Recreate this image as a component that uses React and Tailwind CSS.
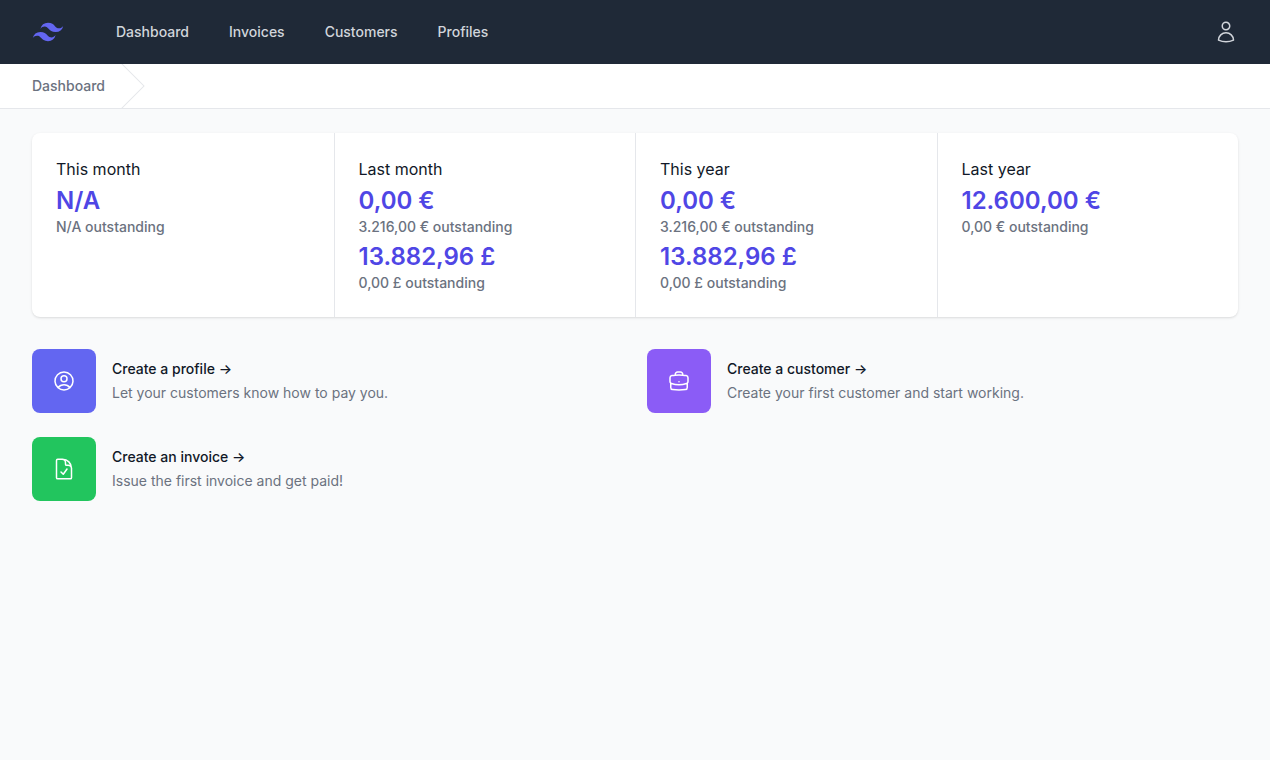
import React from 'react';
import {
  HiOutlineBriefcase,
  HiOutlineDocumentCheck,
  HiOutlineUser,
  HiOutlineUserCircle,
} from 'react-icons/hi2';

const navigation = ['Dashboard', 'Invoices', 'Customers', 'Profiles'];

const stats = [
  { name: 'This month', totals: [{ value: 'N/A', outstanding: 'N/A' }] },
  {
    name: 'Last month',
    totals: [
      { value: '0,00 €', outstanding: '3.216,00 €' },
      { value: '13.882,96 £', outstanding: '0,00 £' },
    ],
  },
  {
    name: 'This year',
    totals: [
      { value: '0,00 €', outstanding: '3.216,00 €' },
      { value: '13.882,96 £', outstanding: '0,00 £' },
    ],
  },
  { name: 'Last year', totals: [{ value: '12.600,00 €', outstanding: '0,00 €' }] },
];

const actions = [
  {
    title: 'Create a profile',
    description: 'Let your customers know how to pay you.',
    icon: HiOutlineUserCircle,
    background: 'bg-[#6366f1]',
  },
  {
    title: 'Create a customer',
    description: 'Create your first customer and start working.',
    icon: HiOutlineBriefcase,
    background: 'bg-[#8b5cf6]',
  },
  {
    title: 'Create an invoice',
    description: 'Issue the first invoice and get paid!',
    icon: HiOutlineDocumentCheck,
    background: 'bg-[#22c55e]',
  },
];

function Logo() {
  return (
    <svg className="h-8 w-8 text-[#6366f1]" viewBox="-0.6 -0.6 25.2 25.2" fill="currentColor" aria-hidden="true">
      <path d="M12.001 4.8c-3.2 0-5.2 1.6-6 4.8 1.2-1.6 2.6-2.2 4.2-1.8.913.228 1.565.89 2.288 1.624C13.666 10.618 15.027 12 18.001 12c3.2 0 5.2-1.6 6-4.8-1.2 1.6-2.6 2.2-4.2 1.8-.913-.228-1.565-.89-2.288-1.624C16.337 6.182 14.976 4.8 12.001 4.8zm-6 7.2c-3.2 0-5.2 1.6-6 4.8 1.2-1.6 2.6-2.2 4.2-1.8.913.228 1.565.89 2.288 1.624 1.177 1.194 2.538 2.576 5.512 2.576 3.2 0 5.2-1.6 6-4.8-1.2 1.6-2.6 2.2-4.2 1.8-.913-.228-1.565-.89-2.288-1.624C10.337 13.382 8.976 12 6.001 12z" />
    </svg>
  );
}

function Header() {
  return (
    <header className="flex h-16 items-center justify-between bg-[#1f2937] px-8">
      <div className="flex items-center gap-10">
        <a href="#" aria-label="Home">
          <Logo />
        </a>
        <nav className="flex gap-4">
          {navigation.map((name) => (
            <a
              key={name}
              href="#"
              className="rounded-md px-3 py-2 text-sm font-medium text-[#d1d5db] hover:bg-[#374151] hover:text-white"
            >
              {name}
            </a>
          ))}
        </nav>
      </div>
      <button type="button" aria-label="Open user menu" className="text-[#d1d5db] hover:text-white">
        <HiOutlineUser className="h-6 w-6" />
      </button>
    </header>
  );
}

function Breadcrumbs() {
  return (
    <nav aria-label="Breadcrumb" className="border-b border-[#e5e7eb] bg-white px-8">
      <ol className="flex">
        <li className="flex h-11 items-center gap-4">
          <a href="#" className="text-sm font-medium text-[#6b7280] hover:text-[#374151]">
            Dashboard
          </a>
          <svg
            className="h-full w-6 text-[#e5e7eb]"
            viewBox="0 0 24 44"
            preserveAspectRatio="none"
            fill="currentColor"
            aria-hidden="true"
          >
            <path d="M.293 0l22 22-22 22h1.414l22-22-22-22H.293z" />
          </svg>
        </li>
      </ol>
    </nav>
  );
}

function Stats() {
  return (
    <dl className="grid grid-cols-4 overflow-hidden rounded-lg bg-white shadow-sm">
      {stats.map((stat) => (
        <div key={stat.name} className="border-l border-[#e5e7eb] p-6 first:border-l-0">
          <dt className="text-base text-[#111827]">{stat.name}</dt>
          {stat.totals.map((total) => (
            <dd key={total.value} className="pt-1">
              <div className="text-2xl font-semibold text-[#4f46e5]">{total.value}</div>
              <div className="text-sm font-medium text-[#6b7280]">{total.outstanding} outstanding</div>
            </dd>
          ))}
        </div>
      ))}
    </dl>
  );
}

function Actions() {
  return (
    <ul className="mt-8 grid grid-cols-2 gap-6">
      {actions.map(({ title, description, icon: Icon, background }) => (
        <li key={title} className="flex items-center gap-4">
          <div className={`flex h-16 w-16 shrink-0 items-center justify-center rounded-lg ${background}`}>
            <Icon className="h-6 w-6 text-white" />
          </div>
          <div>
            <h3 className="text-sm font-medium text-[#111827]">
              <a href="#">
                {title} <span aria-hidden="true">→</span>
              </a>
            </h3>
            <p className="mt-1 text-sm text-[#6b7280]">{description}</p>
          </div>
        </li>
      ))}
    </ul>
  );
}

export default function App() {
  return (
    <div className="min-h-screen bg-[#f9fafb] font-['Inter',sans-serif]">
      <Header />
      <Breadcrumbs />
      <main className="px-8 py-6">
        <Stats />
        <Actions />
      </main>
    </div>
  );
}
